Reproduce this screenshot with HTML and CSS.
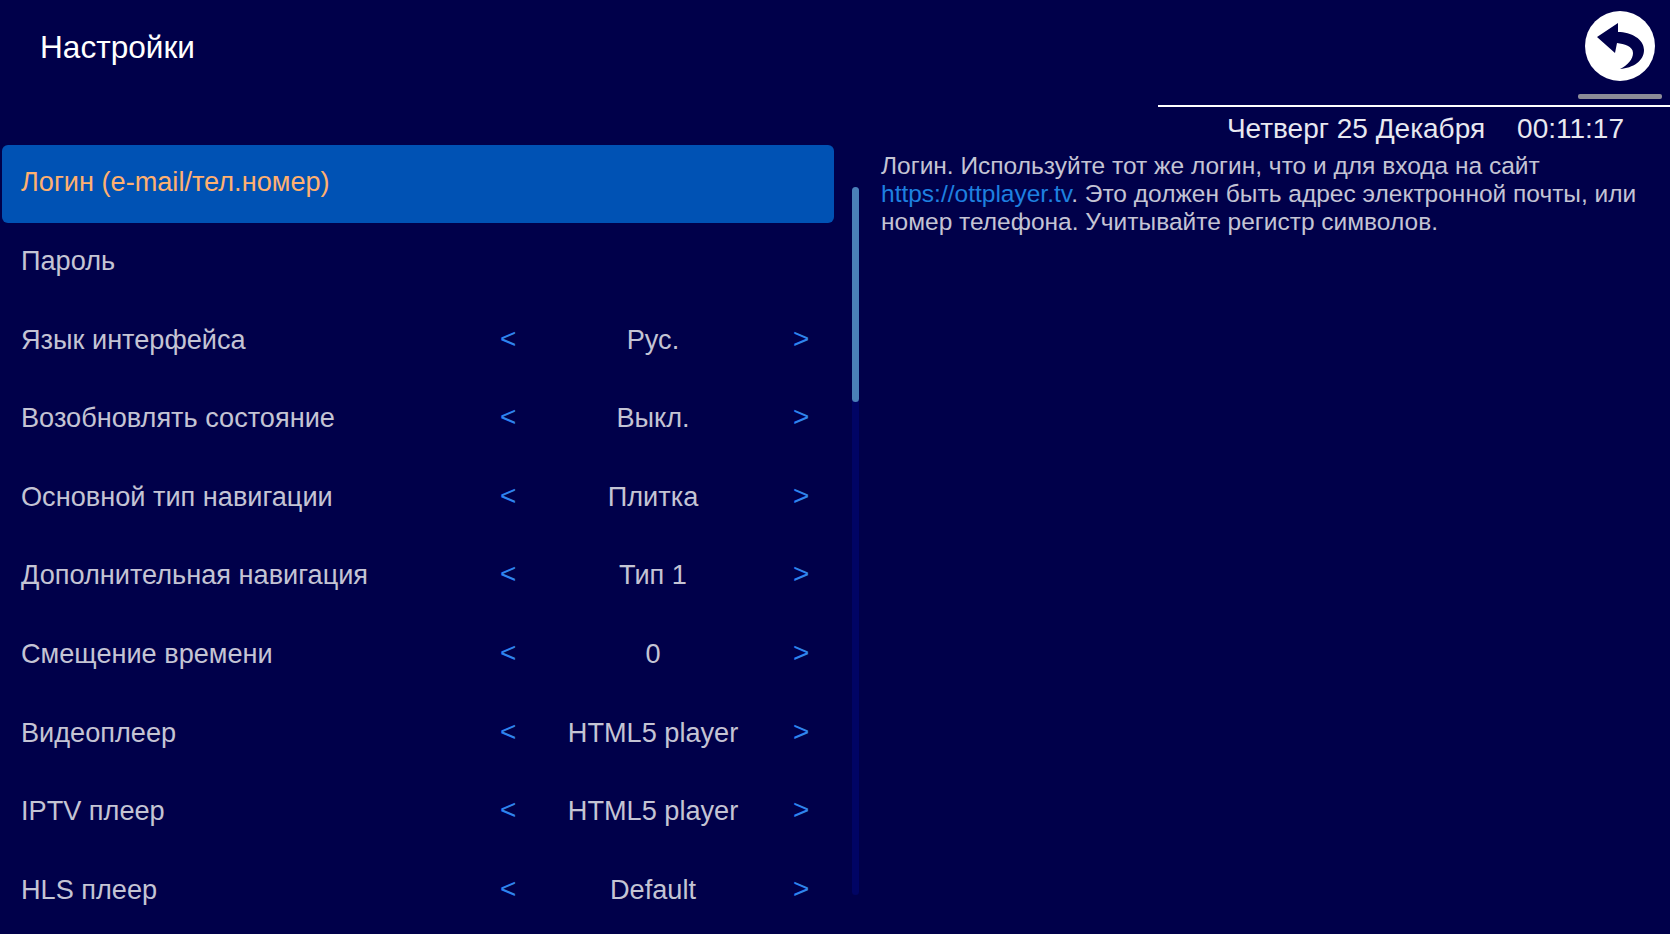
FILE: index.html
```html
<!DOCTYPE html>
<html lang="ru">
<head>
<meta charset="utf-8">
<title>Настройки</title>
<link rel="stylesheet" href="styles.css">
</head>
<body>
<div class="app">
  <header class="header">
    <h1 class="title">Настройки</h1>
    <div class="header-right">
      <div class="back-wrap">
        <button class="back" aria-label="Назад">
          <svg viewBox="0 0 70 70" width="70" height="70"><circle cx="35" cy="35" r="35" fill="#fff"/><path d="M33 12 L12 26 L30 42 L32 32 C39 33 48 35 48 42 C48 48 43 54 35 58 C48 57 59 50 59 39 C59 28 46 21 33 21 Z" fill="#00004a"/></svg>
        </button>
        <div class="back-bar"></div>
      </div>
      <div class="rule"></div>
      <div class="clock"><span>Четверг 25 Декабря</span><span>00:11:17</span></div>
    </div>
  </header>
  <main class="main">
    <section class="list-area">
      <ul class="list">
        <li class="row selected"><span class="label">Логин (e-mail/тел.номер)</span></li>
        <li class="row"><span class="label">Пароль</span></li>
        <li class="row"><span class="label">Язык интерфейса</span><span class="picker"><i>&lt;</i><b>Рус.</b><i>&gt;</i></span></li>
        <li class="row"><span class="label">Возобновлять состояние</span><span class="picker"><i>&lt;</i><b>Выкл.</b><i>&gt;</i></span></li>
        <li class="row"><span class="label">Основной тип навигации</span><span class="picker"><i>&lt;</i><b>Плитка</b><i>&gt;</i></span></li>
        <li class="row"><span class="label">Дополнительная навигация</span><span class="picker"><i>&lt;</i><b>Тип 1</b><i>&gt;</i></span></li>
        <li class="row"><span class="label">Смещение времени</span><span class="picker"><i>&lt;</i><b>0</b><i>&gt;</i></span></li>
        <li class="row"><span class="label">Видеоплеер</span><span class="picker"><i>&lt;</i><b>HTML5 player</b><i>&gt;</i></span></li>
        <li class="row"><span class="label">IPTV плеер</span><span class="picker"><i>&lt;</i><b>HTML5 player</b><i>&gt;</i></span></li>
        <li class="row"><span class="label">HLS плеер</span><span class="picker"><i>&lt;</i><b>Default</b><i>&gt;</i></span></li>
      </ul>
      <div class="track"><div class="thumb"></div></div>
    </section>
    <p class="desc">Логин. Используйте тот же логин, что и для входа на сайт <a href="#">https://ottplayer.tv</a>. Это должен быть адрес электронной почты, или номер телефона. Учитывайте регистр символов.</p>
  </main>
</div>
</body>
</html>
```
FILE: styles.css
```css
* { box-sizing: border-box; }
html, body { margin: 0; height: 100%; overflow: hidden; }
body { background: #00004a; font-family: "Liberation Sans", Arial, sans-serif; color: #c4c4d4; }
.app { height: 934px; display: flex; flex-direction: column; }
.header { height: 145px; display: flex; justify-content: space-between; }
.title { margin: 30px 0 0 40px; font-size: 31.6px; line-height: 34px; font-weight: 400; color: #fff; }
.header-right { width: 512px; display: flex; flex-direction: column; align-items: stretch; padding-top: 11px; }
.back-wrap { display: flex; flex-direction: column; align-items: flex-end; padding-right: 8px; gap: 13px; }
.back { width: 84px; height: 70px; border: 0; padding: 0; background: none; display: flex; justify-content: center; }
.back svg { display: block; }
.back-bar { width: 84px; height: 5px; border-radius: 2px; background: #8c8c98; }
.rule { height: 2px; margin-top: 6px; background: #fff; }
.clock { display: flex; justify-content: flex-end; gap: 32px; padding-right: 46px; margin-top: 6px; font-size: 28px; line-height: 32px; color: #e8e8f0; }
.main { flex: 1; display: flex; min-height: 0; }
.list-area { width: 881px; flex: none; display: flex; align-items: flex-start; }
.list { list-style: none; margin: 0 0 0 2px; padding: 0; width: 832px; }
.row { height: 78.6px; display: flex; align-items: center; justify-content: space-between; padding: 0 25px 3.6px 19px; font-size: 27.15px; border-radius: 6px; }
.row.selected { height: 78px; margin-bottom: 0.6px; background: #0052b4; color: #ffb070; }
.picker { width: 309px; display: flex; justify-content: space-between; align-items: center; }
.picker i { font-style: normal; color: #2f84ee; width: 16px; text-align: center; font-size: 28px; line-height: 26px; position: relative; top: -1px; }
.picker b { font-weight: 400; flex: 1; text-align: center; position: relative; left: -1.5px; }
.track { width: 7px; height: 708px; margin: 42px 0 0 18px; background: #000464; border-radius: 4px; }
.thumb { height: 215px; background: #4a80b8; border-radius: 4px; }
.desc { margin: 7px 0 0; width: 770px; font-size: 24.5px; line-height: 28px; color: #c4c4d4; }
.desc a { color: #1e80e0; text-decoration: none; }
```
